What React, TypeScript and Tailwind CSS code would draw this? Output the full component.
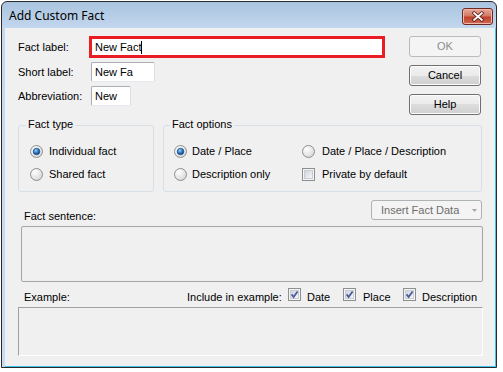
const Radio = ({ checked }: { checked?: boolean }) => (
  <svg width="13" height="13" viewBox="0 0 13 13" className="shrink-0">
    <defs>
      <radialGradient id="rbg" cx="0.35" cy="0.3" r="0.8">
        <stop offset="0" stopColor="#ffffff" />
        <stop offset="1" stopColor="#d4d4d4" />
      </radialGradient>
      <radialGradient id="rdot" cx="0.4" cy="0.35" r="0.7">
        <stop offset="0" stopColor="#8fd3ff" />
        <stop offset="0.6" stopColor="#1f6fc0" />
        <stop offset="1" stopColor="#0d3f7a" />
      </radialGradient>
    </defs>
    <circle cx="6.5" cy="6.5" r="6" fill="url(#rbg)" stroke="#8e8f8f" />
    {checked && <circle cx="6.5" cy="6.5" r="3.3" fill="url(#rdot)" stroke="#193f6e" strokeWidth="0.6" />}
  </svg>
)

const Check = ({ checked }: { checked?: boolean }) => (
  <svg width="13" height="13" viewBox="0 0 13 13" className="shrink-0">
    <defs>
      <linearGradient id="cbg" x1="0" y1="0" x2="1" y2="1">
        <stop offset="0" stopColor="#cfd4dc" />
        <stop offset="1" stopColor="#f6f7f9" />
      </linearGradient>
    </defs>
    <rect x="0.5" y="0.5" width="12" height="12" fill="#f4f4f4" stroke="#8e8f8f" />
    <rect x="2.5" y="2.5" width="8" height="8" fill="url(#cbg)" stroke="#c9cdd3" />
    {checked && (
      <path d="M3.6 6.4 L5.6 9 L9.6 3.4" fill="none" stroke="#4a5d9c" strokeWidth="1.8" />
    )}
  </svg>
)

const Button = ({ label, disabled }: { label: string; disabled?: boolean }) =>
  disabled ? (
    <div className="w-[72px] h-[21px] rounded-[3px] border border-[#b8bcbf] bg-[#f4f4f4] text-[#8d8d8d] flex items-center justify-center">
      {label}
    </div>
  ) : (
    <div className="w-[72px] h-[21px] rounded-[3px] border border-[#707070] bg-[linear-gradient(#f2f2f2,#ebebeb_50%,#dddddd_50%,#cfcfcf)] shadow-[inset_0_0_0_1px_#fcfcfc] flex items-center justify-center">
      {label}
    </div>
  )

export default function App() {
  return (
    <div className="w-[503px] h-[372px] bg-white pt-px pl-px font-['Liberation_Sans',Arial,sans-serif] text-[11px] leading-[13px] text-black">
      <div className="w-[496px] h-[367px] flex flex-col rounded-t-[6px] border border-[#2a2a2a] bg-[linear-gradient(#a9c3df,#c4d8ee_27px,#c8dcf1)]">
        {/* title bar */}
        <div className="h-[26px] flex items-start shrink-0">
          <span className="mt-[6px] ml-[7px] font-['Noto_Sans',sans-serif] text-[12px] leading-[16px]">
            Add Custom Fact
          </span>
          <div className="ml-auto mt-[6px] mr-[3px] w-[31px] h-[17px] rounded-[3px] border border-[#6e2a22] bg-[linear-gradient(#e8a899,#d47a66_45%,#c0402c_55%,#cf6b52)] shadow-[inset_0_0_0_1px_#f0b8aa] flex items-center justify-center">
            <svg width="14" height="11" viewBox="0 0 14 11">
              <path d="M3 2 L11 9 M11 2 L3 9" stroke="#4a1510" strokeWidth="3.4" strokeLinecap="round" />
              <path d="M3 2 L11 9 M11 2 L3 9" stroke="#ffffff" strokeWidth="1.8" strokeLinecap="round" />
            </svg>
          </div>
        </div>

        {/* client area */}
        <div className="flex-1 ml-[3px] bg-[#f0f0f0] border-r border-b border-[#3fc3ef]">
          <div className="w-[478px] pl-[13px] pt-[8px]">
            {/* labels, inputs, buttons */}
            <div className="flex">
              <div className="w-[367px] flex flex-col">
                <div className="flex items-center h-[22px]">
                  <span className="w-[71px]">Fact label:</span>
                  <div className="w-[296px] h-[22px] border-[3px] border-[#ec1c24] bg-white flex items-center pl-[3px]">
                    <span>New Fact</span>
                    <span className="w-px h-[13px] bg-black" />
                  </div>
                </div>
                <div className="flex items-center h-[20px] mt-[4px]">
                  <span className="w-[73px]">Short label:</span>
                  <div className="w-[64px] h-[20px] rounded-[2px] border border-[#abadb3] border-r-[#dbdfe6] border-b-[#e3e9ef] bg-white flex items-center pl-[3px]">
                    New Fa
                  </div>
                </div>
                <div className="flex items-center h-[20px] mt-[4px]">
                  <span className="w-[73px]">Abbreviation:</span>
                  <div className="w-[40px] h-[20px] rounded-[2px] border border-[#abadb3] border-r-[#dbdfe6] border-b-[#e3e9ef] bg-white flex items-center pl-[3px]">
                    New
                  </div>
                </div>
              </div>
              <div className="ml-[24px] flex flex-col gap-[8px]">
                <Button label="OK" disabled />
                <Button label="Cancel" />
                <Button label="Help" />
              </div>
            </div>

            {/* group boxes */}
            <div className="flex gap-[9px] mt-[10px]">
              <div className="relative w-[136px] h-[67px] rounded-[3px] border border-[#d5dfe5] pt-[19px] pl-[11px]">
                <span className="absolute top-[-8px] left-[7px] px-[2px] bg-[#f0f0f0]">Fact type</span>
                <div className="flex flex-col gap-[10px]">
                  <div className="flex items-center gap-[6px]">
                    <Radio checked />
                    <span>Individual fact</span>
                  </div>
                  <div className="flex items-center gap-[6px]">
                    <Radio />
                    <span>Shared fact</span>
                  </div>
                </div>
              </div>
              <div className="relative w-[319px] h-[67px] rounded-[3px] border border-[#d5dfe5] pt-[19px] pl-[10px]">
                <span className="absolute top-[-8px] left-[6px] px-[2px] bg-[#f0f0f0]">Fact options</span>
                <div className="grid grid-cols-[128px_auto] gap-y-[10px]">
                  <div className="flex items-center gap-[5px]">
                    <Radio checked />
                    <span>Date / Place</span>
                  </div>
                  <div className="flex items-center gap-[7px]">
                    <Radio />
                    <span>Date / Place / Description</span>
                  </div>
                  <div className="flex items-center gap-[5px]">
                    <Radio />
                    <span>Description only</span>
                  </div>
                  <div className="flex items-center gap-[7px]">
                    <Check />
                    <span>Private by default</span>
                  </div>
                </div>
              </div>
            </div>

            {/* fact sentence */}
            <div className="flex items-start justify-between mt-[8px] w-[465px] h-[20px]">
              <span className="ml-[6px] mt-[10px]">Fact sentence:</span>
              <div className="mr-px w-[111px] h-[20px] rounded-[3px] border border-[#adb2b5] bg-[#f4f4f4] text-[#6d6d6d] flex items-center pl-[9px]">
                <span>Insert Fact Data</span>
                <svg width="5" height="3" viewBox="0 0 5 3" className="ml-auto mr-[4px]">
                  <path d="M0 0 H5 L2.5 3 Z" fill="#a6a6a6" />
                </svg>
              </div>
            </div>
            <div className="ml-[3px] mt-[6px] w-[462px] h-[56px] rounded-[2px] border border-[#a5a5a5] bg-[#f0f0f0]" />

            {/* example */}
            <div className="flex items-start mt-[6px] h-[16px]">
              <span className="ml-[6px] w-[163px] mt-[3px]">Example:</span>
              <span className="w-[101px] mt-[3px]">Include in example:</span>
              <Check checked />
              <span className="ml-[6px] w-[36px] mt-[3px]">Date</span>
              <Check checked />
              <span className="ml-[7px] w-[40px] mt-[3px]">Place</span>
              <Check checked />
              <span className="ml-[6px] mt-[3px]">Description</span>
            </div>
            <div className="mt-[3px] w-[465px] h-[49px] border border-[#a0a0a0] border-r-white border-b-white bg-[#f0f0f0]" />
          </div>
        </div>
      </div>
    </div>
  )
}
